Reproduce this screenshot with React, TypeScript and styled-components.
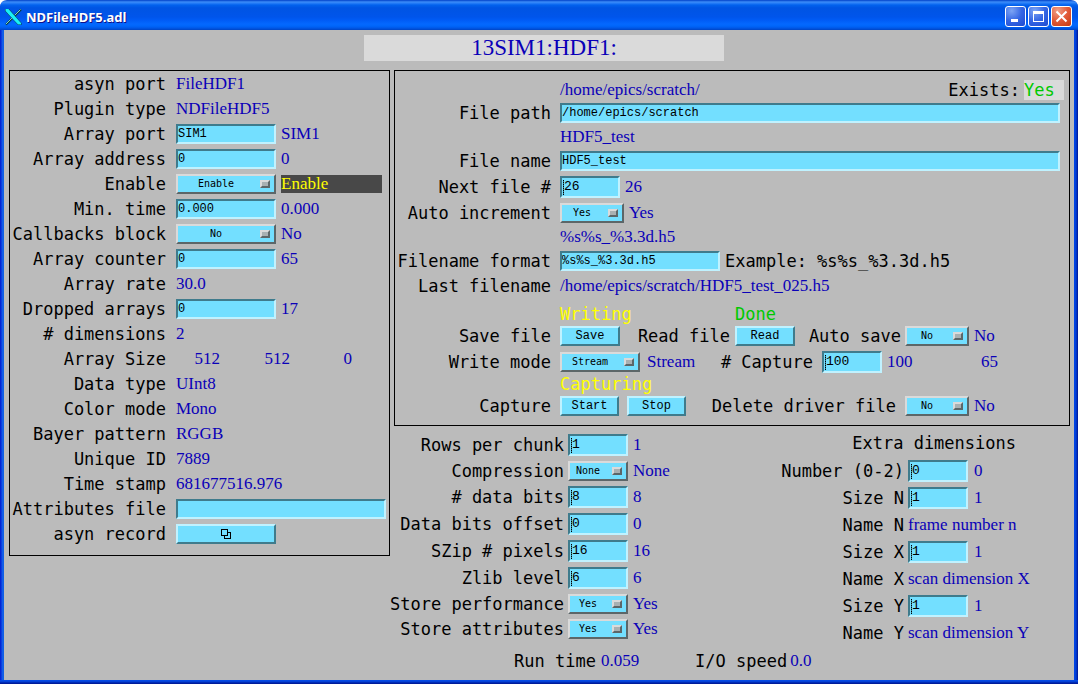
import React, { ReactNode, useId } from 'react';
import styled, { createGlobalStyle } from 'styled-components';

const LABEL_FONT = '"DejaVu Sans Mono", monospace';
const FIELD_FONT = '"Liberation Mono", monospace';
const MENU_FONT = '"DejaVu Sans Mono", monospace';
const VALUE_FONT = '"Liberation Serif", serif';
const CYAN = '#73dfff';
const CYAN_DARK = '#3f7b8c';
const CYAN_LIGHT = '#c0f2ff';

const GlobalStyle = createGlobalStyle`
  * { box-sizing: border-box; }
  body { margin: 0; background: #ffffff; }
`;

const Window = styled.div`
  display: flex;
  flex-direction: column;
  min-height: 100vh;
  min-width: 1078px;
  border-radius: 7px 7px 0 0;
  overflow: hidden;
  padding: 0 4px 4px;
  background:
    linear-gradient(to bottom, #0046e0, #0a4fe8 1px, #0033c4 2px, #00138c) bottom / 100% 4px no-repeat,
    linear-gradient(to right, #0019cf, #0831d9 1px, #166aee 3px, #0855dd) left / 4px 100% no-repeat,
    linear-gradient(to right, #0046e8, #003dd6 2px, #00138c) right / 4px 100% no-repeat;
`;

const TitleBar = styled.header`
  display: flex;
  align-items: center;
  flex: none;
  height: 30px;
  margin: 0 -4px;
  padding: 3px 6px 0 5px;
  background: linear-gradient(
    to bottom,
    #0040c8 0, #3c8cf8 2px, #2a80f8 3px, #0262ee 5px, #0054e3 8px,
    #0055eb 17px, #005bf5 20px, #0468fe 24px, #0066fa 26px, #0058e8 28px, #0044c4 30px
  );
`;

const TitleText = styled.h1`
  flex: 1;
  margin: 0 0 0 4px;
  font: bold 13px/20px "Noto Sans", sans-serif;
  color: #ffffff;
  text-shadow: 1px 1px 0 #0f1089;
`;

const CaptionButton = styled.button<{ $danger?: boolean }>`
  display: grid;
  place-items: center;
  width: 21px;
  height: 21px;
  margin-left: 2px;
  padding: 0;
  border: 1px solid #ffffff;
  border-radius: 3px;
  background: ${(p) =>
    p.$danger
      ? 'radial-gradient(circle at 30% 20%, #f0a088, #e25a38 50%, #c63a10)'
      : 'radial-gradient(circle at 30% 20%, #7ca4f4, #3566e4 50%, #1c4ad0)'};
`;

const Screen = styled.main`
  flex: 1;
  padding: 5px 4px 5px 5px;
  background: #bbbbbb;
`;

const Banner = styled.div`
  display: flex;
  justify-content: center;
  padding-left: 9px;
  margin-bottom: 9px;
`;

const BannerText = styled.h2`
  width: 360px;
  margin: 0;
  background: #dadada;
  color: #0a00b8;
  text-align: center;
  font: 23px/26px ${VALUE_FONT};
`;

const Columns = styled.div`
  display: grid;
  grid-template-columns: 381px minmax(676px, 1fr);
  gap: 4px;
  align-items: start;
`;

const Panel = styled.section<{ $bottom: number; $top: number }>`
  border: 1px solid #000000;
  padding: ${(p) => p.$top}px 5px ${(p) => p.$bottom}px 0;
`;

const Stack = styled.div<{ $top?: number }>`
  padding-top: ${(p) => p.$top ?? 0}px;
  display: flex;
  flex-direction: column;
  gap: 5px;
`;

const Lower = styled.div`
  display: grid;
  grid-template-columns: 390px 1fr;
  padding-top: 8px;
`;

const Row = styled.div<{ $h?: number; $mt?: number }>`
  display: flex;
  align-items: center;
  height: ${(p) => p.$h ?? 20}px;
  margin-top: ${(p) => p.$mt ?? 0}px;
`;

const labelText = `
  font: 17px/20px ${LABEL_FONT};
  color: #000000;
  white-space: pre;
`;

const Label = styled.label<{ $w: number; $gap: number }>`
  ${labelText}
  display: flex;
  flex: none;
  justify-content: flex-end;
  width: ${(p) => p.$w}px;
  margin-right: ${(p) => p.$gap}px;
`;

const Text = styled.span<{ $color?: string; $w?: number; $ml?: number }>`
  ${labelText}
  flex: none;
  color: ${(p) => p.$color ?? '#000000'};
  width: ${(p) => (p.$w ? `${p.$w}px` : 'auto')};
  margin-left: ${(p) => p.$ml ?? 0}px;
`;

const Value = styled.output<{ $w?: number; $ml?: number; $right?: boolean }>`
  flex: none;
  width: ${(p) => (p.$w ? `${p.$w}px` : 'auto')};
  margin-left: ${(p) => p.$ml ?? 0}px;
  padding-bottom: 1px;
  text-align: ${(p) => (p.$right ? 'right' : 'left')};
  font: 17px/18px ${VALUE_FONT};
  color: #0a00b8;
  white-space: pre;
`;

const EnableState = styled(Value)`
  width: 101px;
  padding: 0;
  background: #484848;
  color: #ffff00;
`;

const ExistsLabel = styled(Text)`
  margin-left: auto;
  margin-right: 4px;
`;

const ExistsState = styled(Text)`
  width: 40px;
  background: #dadada;
  color: #00c800;
`;

const Field = styled.input<{ $w?: number; $tall?: boolean }>`
  flex: ${(p) => (p.$w ? 'none' : '1')};
  width: ${(p) => (p.$w ? `${p.$w}px` : 'auto')};
  min-width: 0;
  height: ${(p) => (p.$tall ? 22 : 20)}px;
  padding: 0 0 1px ${(p) => (p.$tall ? 2 : 0)}px;
  border: 2px solid;
  border-color: ${CYAN_DARK} ${CYAN_LIGHT} ${CYAN_LIGHT} ${CYAN_DARK};
  border-radius: 0;
  outline: none;
  background: ${(p) =>
    p.$tall
      ? `repeating-linear-gradient(to bottom, #000000 0 1px, ${CYAN_DARK} 1px 2px) 1px 2px / 1px 15px no-repeat ${CYAN}`
      : CYAN};
  color: #000000;
  font: ${(p) => (p.$tall ? 13 : 12)}px ${FIELD_FONT};
`;

const PathField = styled(Field)`
  margin-right: 4px;
`;

const PushButton = styled.button<{ $w: number; $ml?: number }>`
  display: grid;
  place-items: center;
  flex: none;
  width: ${(p) => p.$w}px;
  height: 20px;
  margin-left: ${(p) => p.$ml ?? 0}px;
  padding: 0;
  border: 2px solid;
  border-color: ${CYAN_LIGHT} ${CYAN_DARK} ${CYAN_DARK} ${CYAN_LIGHT};
  border-radius: 0;
  background: ${CYAN};
  color: #000000;
  font: 12px/16px ${FIELD_FONT};
`;

const MenuBox = styled.div<{ $w: number }>`
  position: relative;
  flex: none;
  width: ${(p) => p.$w}px;
  height: 20px;
`;

const MenuSelect = styled.select`
  appearance: none;
  display: block;
  width: 100%;
  height: 100%;
  padding: 0 20px 1px 0;
  border: 2px solid;
  border-color: #dadada #5c6668 #5c6668 #dadada;
  border-radius: 0;
  background: ${CYAN};
  color: #000000;
  font: 10px ${MENU_FONT};
  text-align: center;
  text-align-last: center;
`;

const MenuKnob = styled.span`
  position: absolute;
  right: 6px;
  top: 6px;
  width: 10px;
  height: 8px;
  border: 2px solid;
  border-color: #dadada #5c6668 #5c6668 #dadada;
  background: #a8b0b2;
  pointer-events: none;
`;

function Menu({ id, w, value, options }: { id: string; w: number; value: string; options: string[] }) {
  return (
    <MenuBox $w={w}>
      <MenuSelect id={id} defaultValue={value}>
        {options.map((o) => (
          <option key={o}>{o}</option>
        ))}
      </MenuSelect>
      <MenuKnob />
    </MenuBox>
  );
}

const YES_NO = ['No', 'Yes'];

type LineProps = {
  label: string;
  labelW: number;
  labelGap: number;
  h?: number;
  mt?: number;
  children: (id: string) => ReactNode;
};

function Line({ label, labelW, labelGap, h, mt, children }: LineProps) {
  const id = useId();
  return (
    <Row $h={h} $mt={mt}>
      <Label htmlFor={id} $w={labelW} $gap={labelGap}>
        {label}
      </Label>
      {children(id)}
    </Row>
  );
}

function PluginPanel() {
  const line = (label: string, children: (id: string) => ReactNode) => (
    <Line label={label} labelW={156} labelGap={10}>
      {children}
    </Line>
  );
  const readback = (label: string, value: string) => line(label, (id) => <Value id={id}>{value}</Value>);
  const field = (label: string, text: string, value: string) =>
    line(label, (id) => (
      <>
        <Field id={id} $w={100} defaultValue={text} />
        <Value $ml={5}>{value}</Value>
      </>
    ));
  return (
    <Panel $top={3} $bottom={11}>
      <Stack>
        {readback('asyn port', 'FileHDF1')}
        {readback('Plugin type', 'NDFileHDF5')}
        {field('Array port', 'SIM1', 'SIM1')}
        {field('Array address', '0', '0')}
        {line('Enable', (id) => (
          <>
            <Menu id={id} w={100} value="Enable" options={['Disable', 'Enable']} />
            <EnableState $ml={5}>Enable</EnableState>
          </>
        ))}
        {field('Min. time', '0.000', '0.000')}
        {line('Callbacks block', (id) => (
          <>
            <Menu id={id} w={100} value="No" options={YES_NO} />
            <Value $ml={5}>No</Value>
          </>
        ))}
        {field('Array counter', '0', '65')}
        {readback('Array rate', '30.0')}
        {field('Dropped arrays', '0', '17')}
        {readback('# dimensions', '2')}
        {line('Array Size', (id) => (
          <>
            <Value id={id} $w={44} $right>512</Value>
            <Value $w={70} $right>512</Value>
            <Value $w={62} $right>0</Value>
          </>
        ))}
        {readback('Data type', 'UInt8')}
        {readback('Color mode', 'Mono')}
        {readback('Bayer pattern', 'RGGB')}
        {readback('Unique ID', '7889')}
        {readback('Time stamp', '681677516.976')}
        {line('Attributes file', (id) => (
          <Field id={id} $w={210} defaultValue="" />
        ))}
        {line('asyn record', (id) => (
          <PushButton id={id} $w={100} aria-label="Open asyn record">
            <svg width="11" height="11" viewBox="0 0 11 11" fill="none" stroke="#000" shapeRendering="crispEdges">
              <path d="M3.5 6.5v3h6v-6h-3" />
              <rect x="0.5" y="0.5" width="6" height="6" />
            </svg>
          </PushButton>
        ))}
      </Stack>
    </Panel>
  );
}

function FilePanel() {
  const base = useId();
  const at = { labelW: 156, labelGap: 9 };
  return (
    <Panel $top={9} $bottom={9}>
      <Line label="" {...at}>
        {(id) => (
          <>
            <Value id={id}>/home/epics/scratch/</Value>
            <ExistsLabel>Exists:</ExistsLabel>
            <ExistsState>Yes</ExistsState>
          </>
        )}
      </Line>
      <Line label="File path" {...at} mt={3}>
        {(id) => <PathField id={id} defaultValue="/home/epics/scratch" />}
      </Line>
      <Line label="" {...at} mt={4}>{(id) => <Value id={id}>HDF5_test</Value>}</Line>
      <Line label="File name" {...at} mt={4}>
        {(id) => <PathField id={id} defaultValue="HDF5_test" />}
      </Line>
      <Line label="Next file #" {...at} h={22} mt={5}>
        {(id) => (
          <>
            <Field id={id} $w={60} $tall defaultValue="26" />
            <Value $ml={5}>26</Value>
          </>
        )}
      </Line>
      <Line label="Auto increment" {...at} mt={5}>
        {(id) => (
          <>
            <Menu id={id} w={64} value="Yes" options={YES_NO} />
            <Value $ml={5}>Yes</Value>
          </>
        )}
      </Line>
      <Line label="" {...at} mt={4}>{(id) => <Value id={id}>%s%s_%3.3d.h5</Value>}</Line>
      <Line label="Filename format" {...at} mt={4}>
        {(id) => (
          <>
            <Field id={id} $w={160} defaultValue="%s%s_%3.3d.h5" />
            <Text $ml={5}>Example: %s%s_%3.3d.h5</Text>
          </>
        )}
      </Line>
      <Line label="Last filename" {...at} mt={5}>
        {(id) => <Value id={id}>/home/epics/scratch/HDF5_test_025.h5</Value>}
      </Line>
      <Line label="" {...at} mt={8}>
        {(id) => (
          <>
            <Text id={id} $color="#ffff00" $w={175}>Writing</Text>
            <Text $color="#00c800">Done</Text>
          </>
        )}
      </Line>
      <Line label="Save file" {...at} mt={2}>
        {(id) => (
          <>
            <PushButton id={id} $w={60}>Save</PushButton>
            <Label htmlFor={`${base}read`} $w={110} $gap={5}>Read file</Label>
            <PushButton id={`${base}read`} $w={60}>Read</PushButton>
            <Label htmlFor={`${base}auto`} $w={106} $gap={4}>Auto save</Label>
            <Menu id={`${base}auto`} w={64} value="No" options={YES_NO} />
            <Value $ml={5}>No</Value>
          </>
        )}
      </Line>
      <Line label="Write mode" {...at} h={22} mt={5}>
        {(id) => (
          <>
            <Menu id={id} w={80} value="Stream" options={['Single', 'Capture', 'Stream']} />
            <Value $ml={7} $w={60}>Stream</Value>
            <Label htmlFor={`${base}cap`} $w={106} $gap={9}># Capture</Label>
            <Field id={`${base}cap`} $w={60} $tall defaultValue="100" />
            <Value $ml={5} $w={50}>100</Value>
            <Value $w={61} $right>65</Value>
          </>
        )}
      </Line>
      <Line label="" {...at} mt={1}>
        {(id) => <Text id={id} $color="#ffff00">Capturing</Text>}
      </Line>
      <Line label="Capture" {...at} mt={2}>
        {(id) => (
          <>
            <PushButton id={id} $w={59}>Start</PushButton>
            <PushButton $w={59} $ml={8}>Stop</PushButton>
            <Label htmlFor={`${base}del`} $w={210} $gap={9}>Delete driver file</Label>
            <Menu id={`${base}del`} w={64} value="No" options={YES_NO} />
            <Value $ml={5}>No</Value>
          </>
        )}
      </Line>
    </Panel>
  );
}

const Heading = styled.h3`
  ${labelText}
  margin: 0 54px 0 0;
  font-weight: normal;
  text-align: right;
  line-height: 18px;
`;

function CompressionSettings() {
  const at = { labelW: 170, labelGap: 4 };
  const field = (label: string, value: string) => (
    <Line label={label} {...at} h={22}>
      {(id) => (
        <>
          <Field id={id} $w={60} $tall defaultValue={value} />
          <Value $ml={5}>{value}</Value>
        </>
      )}
    </Line>
  );
  const menu = (label: string, value: string, options: string[]) => (
    <Line label={label} {...at}>
      {(id) => (
        <>
          <Menu id={id} w={60} value={value} options={options} />
          <Value $ml={5}>{value}</Value>
        </>
      )}
    </Line>
  );
  return (
    <Stack>
      {field('Rows per chunk', '1')}
      {menu('Compression', 'None', ['None', 'N-bit', 'szip', 'zlib'])}
      {field('# data bits', '8')}
      {field('Data bits offset', '0')}
      {field('SZip # pixels', '16')}
      {field('Zlib level', '6')}
      {menu('Store performance', 'Yes', YES_NO)}
      {menu('Store attributes', 'Yes', YES_NO)}
    </Stack>
  );
}

function ExtraDimensions() {
  const at = { labelW: 120, labelGap: 4, h: 22 };
  const field = (label: string, value: string) => (
    <Line label={label} {...at}>
      {(id) => (
        <>
          <Field id={id} $w={60} $tall defaultValue={value} />
          <Value $ml={6}>{value}</Value>
        </>
      )}
    </Line>
  );
  const name = (label: string, value: string) => (
    <Line label={label} {...at}>{(id) => <Value id={id}>{value}</Value>}</Line>
  );
  return (
    <div>
      <Heading>Extra dimensions</Heading>
      <Stack $top={8}>
        {field('Number (0-2)', '0')}
        {field('Size N', '1')}
        {name('Name N', 'frame number n')}
        {field('Size X', '1')}
        {name('Name X', 'scan dimension X')}
        {field('Size Y', '1')}
        {name('Name Y', 'scan dimension Y')}
      </Stack>
    </div>
  );
}

export default function App() {
  return (
    <>
      <GlobalStyle />
      <Window>
        <TitleBar>
          <svg width="17" height="18" viewBox="0 0 17 18">
            <path d="M1 16.5L16 1.5" stroke="#0a3a40" strokeWidth="2" />
            <path d="M1 16L9 8L15.500 1.500" stroke="#7fd8c0" strokeWidth="1" />
            <path d="M0 1H4L16.500 15V17H13L0 3z" fill="#0a3a40" />
            <path d="M0.500 1H3.500L16 15V16.500H13L0.500 3z" fill="#18f0f8" />
          </svg>
          <TitleText>NDFileHDF5.adl</TitleText>
          <CaptionButton aria-label="Minimize">
            <svg width="15" height="15" viewBox="0 0 15 15">
              <rect x="3" y="10" width="7" height="3" fill="#fff" />
            </svg>
          </CaptionButton>
          <CaptionButton aria-label="Maximize">
            <svg width="15" height="15" viewBox="0 0 15 15">
              <path d="M2 2h11v11H2zM3 5v7h9V5z" fill="#fff" fillRule="evenodd" />
            </svg>
          </CaptionButton>
          <CaptionButton $danger aria-label="Close">
            <svg width="15" height="15" viewBox="0 0 15 15">
              <path d="M2.500 2.500l10 10M12.500 2.500l-10 10" stroke="#fff" strokeWidth="2" />
            </svg>
          </CaptionButton>
        </TitleBar>
        <Screen>
          <Banner>
            <BannerText>13SIM1:HDF1:</BannerText>
          </Banner>
          <Columns>
            <PluginPanel />
            <div>
              <FilePanel />
              <Lower>
                <CompressionSettings />
                <ExtraDimensions />
              </Lower>
              <Line label="Run time" labelW={202} labelGap={5} mt={7}>
                {(id) => (
                  <>
                    <Value id={id} $w={60}>0.059</Value>
                    <Text $ml={34}>I/O speed</Text>
                    <Value $ml={3}>0.0</Value>
                  </>
                )}
              </Line>
            </div>
          </Columns>
        </Screen>
      </Window>
    </>
  );
}
